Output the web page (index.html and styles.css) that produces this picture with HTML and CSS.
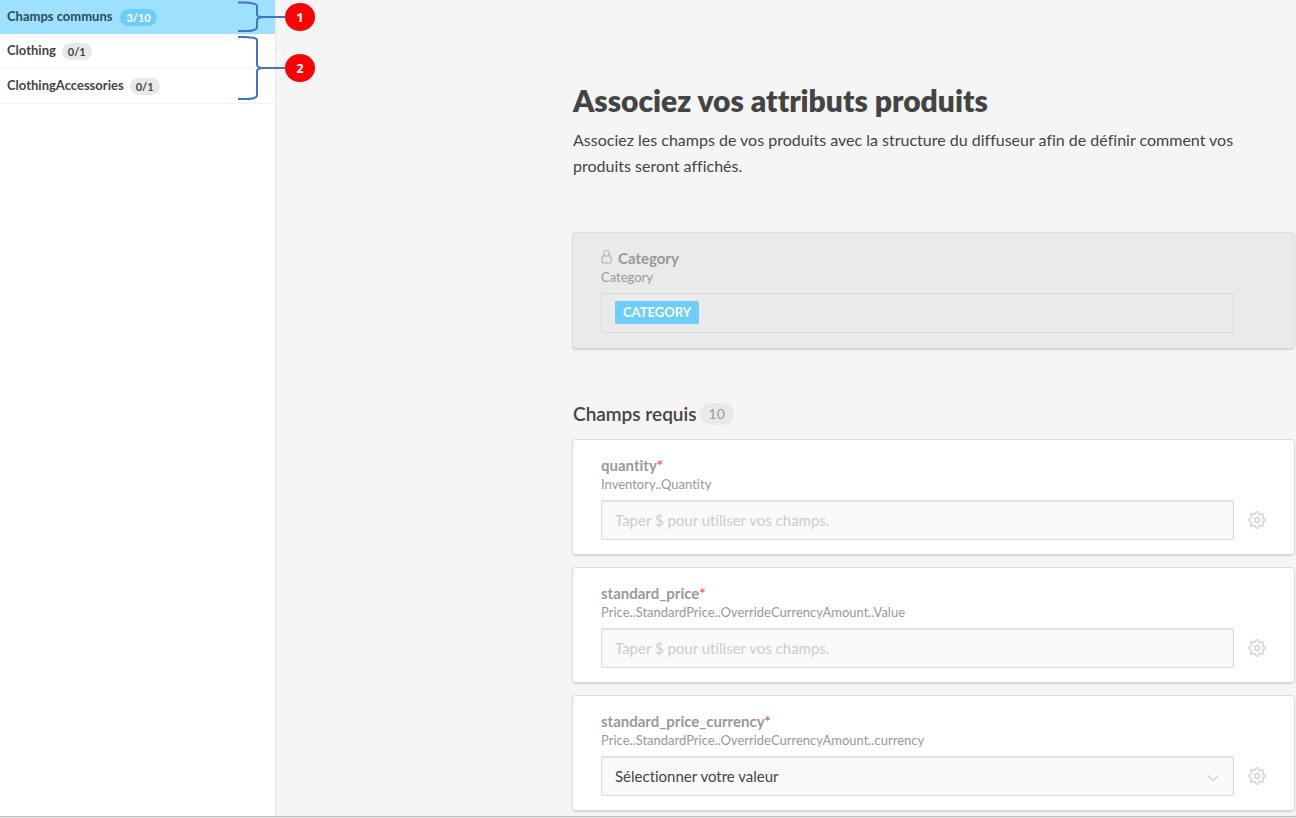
FILE: index.html
```
<!DOCTYPE html>
<html lang="fr">
<head>
<meta charset="utf-8">
<title>Associez vos attributs produits</title>
<link rel="stylesheet" href="styles.css">
</head>
<body>
<svg class="defs" aria-hidden="true">
  <symbol id="gear" viewBox="0 0 18 18">
    <path d="M7.6 2.2Q7.7.8 9 .8t1.400 1.400q.2 1 .9 1.200t1.400-.3q1.100-1 2.100-.1t-.1 2.200q-.6.800-.3 1.400t1.200.9q1.600.2 1.600 1.500t-1.600 1.500q-.9.300-1.200.9t.3 1.400q1 1.200.1 2.100t-2.100-.1q-.8-.6-1.400-.3t-.9 1.200Q10.300 17.200 9 17.200t-1.400-1.500q-.3-.9-.9-1.200t-1.400.3q-1.200 1-2.100.1t.1-2.100q.6-.8.300-1.400t-1.200-.9Q.8 10.300.8 9t1.600-1.500q.9-.3 1.200-.9t-.3-1.400q-1-1.200-.1-2.200t2.100.1q.8.500 1.400.3t.9-1.200z"/>
    <circle cx="9" cy="9" r="2.400"/>
  </symbol>
</svg>
<div class="page">
  <nav class="sidebar" aria-label="Champs">
    <a class="tab tab-active" href="#communs">Champs communs <span class="count">3/10</span></a>
    <a class="tab" href="#clothing">Clothing <span class="count">0/1</span></a>
    <a class="tab" href="#accessories">ClothingAccessories <span class="count">0/1</span></a>
    <div class="note note-first">
      <svg class="brace" width="48" height="32" viewBox="0 0 48 32"><path d="M1 1.500H8C16 2 20 3 20 5V14Q20 16 28 16H48M48 16H28Q20 16 20 19V26C20 29 16 30 8 30H1"/></svg>
      <span class="marker">1</span>
    </div>
    <div class="note note-second">
      <svg class="brace" width="48" height="66" viewBox="0 0 48 66"><path d="M1 2H8C16 2.500 20 3 20 5V30Q20 33 28 33H48M48 33H28Q20 33 20 36V60C20 63 16 64 8 64H1"/></svg>
      <span class="marker">2</span>
    </div>
  </nav>
  <main class="content">
    <h1 class="title">Associez vos attributs produits</h1>
    <p class="intro">Associez les champs de vos produits avec la structure du diffuseur afin de définir comment vos produits seront affichés.</p>

    <section class="card card-locked">
      <div class="name"><svg class="lock" width="11" height="16" viewBox="0 0 11 16"><rect x="1" y="7" width="9" height="7" rx="1"/><path d="M3 7V4a2.500 2.500 0 0 1 5 0v3"/></svg>Category</div>
      <div class="path">Category</div>
      <div class="row"><div class="field"><span class="tag">CATEGORY</span></div></div>
    </section>

    <h2 class="subtitle">Champs requis <span class="total">10</span></h2>

    <div class="cards">
      <section class="card">
        <label class="name" for="quantity">quantity<span class="required">*</span></label>
        <div class="path">Inventory..Quantity</div>
        <div class="row">
          <input class="field" id="quantity" type="text" placeholder="Taper $ pour utiliser vos champs.">
          <button class="settings" type="button" aria-label="Réglages"><svg width="18" height="18"><use href="#gear"/></svg></button>
        </div>
      </section>
      <section class="card">
        <label class="name" for="price">standard_price<span class="required">*</span></label>
        <div class="path">Price..StandardPrice..OverrideCurrencyAmount..Value</div>
        <div class="row">
          <input class="field" id="price" type="text" placeholder="Taper $ pour utiliser vos champs.">
          <button class="settings" type="button" aria-label="Réglages"><svg width="18" height="18"><use href="#gear"/></svg></button>
        </div>
      </section>
      <section class="card">
        <label class="name" for="currency">standard_price_currency<span class="required">*</span></label>
        <div class="path">Price..StandardPrice..OverrideCurrencyAmount..currency</div>
        <div class="row">
          <div class="select">
            <select class="field" id="currency"><option>Sélectionner votre valeur</option></select>
            <svg class="chevron" width="12" height="8" viewBox="0 0 12 8"><path d="M1 1.500l5 5 5-5"/></svg>
          </div>
          <button class="settings" type="button" aria-label="Réglages"><svg width="18" height="18"><use href="#gear"/></svg></button>
        </div>
      </section>
    </div>
  </main>
</div>
</body>
</html>
```
FILE: styles.css
```
* { box-sizing: border-box; }
body {
  margin: 0;
  font-family: Lato, "Liberation Sans", sans-serif;
  font-size: 15px;
  font-variant-ligatures: none;
  color: #444;
  background: #e8e8e8;
}
.defs { position: absolute; width: 0; height: 0; }
.page {
  display: flex;
  min-height: calc(100vh - 1px);
  border-bottom: 1px solid #bfbfbf;
  background: #f5f5f5;
}

.sidebar {
  position: relative;
  flex: 0 0 276px;
  background: #fff;
  border-right: 1px solid #e6e6e6;
}
.tab {
  display: flex;
  align-items: center;
  gap: 6px;
  height: 35px;
  padding: 0 7px 2px;
  border-bottom: 1px solid #f2f2f2;
  color: #444;
  font-size: 13px;
  font-weight: 700;
  text-decoration: none;
}
.tab-active {
  height: 34px;
  gap: 8px;
  background: #9de1ff;
  border-bottom: 0;
  color: #2c4a5e;
}
.count {
  height: 17px;
  margin-top: 3px;
  padding: 0 6px;
  border-radius: 9px;
  background: #e9e9e9;
  font-size: 11px;
  line-height: 17px;
}
.tab-active .count { background: #6dcff9; color: #fff; }

.note {
  position: absolute;
  left: 237px;
  display: flex;
  align-items: center;
}
.note-first { top: 1px; }
.note-second { top: 35px; }
.brace { fill: none; stroke: #4472c4; stroke-width: 2; }
.marker {
  width: 30px;
  height: 28px;
  border-radius: 50%;
  background: #f00;
  color: #fff;
  font: 700 13px/28px "Open Sans", sans-serif;
  text-align: center;
}

.content { flex: 1; min-width: 0; padding: 80px 2px 5px 297px; }
.title { margin: 0; font-size: 30px; line-height: 40px; font-weight: 800; }
.intro { margin: 7px 40px 54px 0; font-size: 16px; line-height: 26px; }
.subtitle {
  display: flex;
  align-items: center;
  gap: 3px;
  margin: 54px 0 14px;
  font-size: 19px;
  line-height: 24px;
  font-weight: 600;
}
.total {
  padding: 0 9px;
  border-radius: 11px;
  background: #e9e9e9;
  color: #999;
  font-size: 14px;
  line-height: 22px;
  font-weight: 400;
}
.cards { display: grid; gap: 14px; }
.card {
  padding: 15px 28px 14px;
  border-radius: 3px;
  background: #fff;
  box-shadow: 0 0 0 1px #dcdcdc, 0 1px 2px 0 #888;
}
.card-locked { padding-right: 60px; padding-bottom: 15px; background: #eaeaea; }
.name {
  display: flex;
  align-items: center;
  color: #999;
  line-height: 20px;
  font-weight: 700;
}
.required { color: #f0655a; }
.lock { margin: 0 6px 3px 0; fill: none; stroke: #aaa; }
.path { color: #999; font-size: 13px; line-height: 19px; }
.row { display: flex; align-items: center; gap: 14px; margin-top: 6px; }
.field {
  flex: 1;
  width: 100%;
  min-width: 0;
  height: 40px;
  padding: 0 13px 1px;
  border: 1px solid #d9d9d9;
  border-radius: 2px;
  background: #fafafa;
  box-shadow: inset 0 1px 2px #e6e6e6;
  color: #444;
  font: inherit;
  font-variant-ligatures: none;
  appearance: none;
}
.field::placeholder { color: #ccc; opacity: 1; }
.card-locked .field {
  display: flex;
  align-items: center;
  background: transparent;
  box-shadow: none;
}
.tag {
  padding: 0 8px;
  border-radius: 2px;
  background: #6dcff9;
  color: #fff;
  font-size: 13px;
  line-height: 23px;
  font-weight: 700;
}
.select { position: relative; display: flex; flex: 1; }
.chevron {
  position: absolute;
  right: 15px;
  top: 18px;
  fill: none;
  stroke: #d0d0d0;
  stroke-width: 1.500;
  pointer-events: none;
}
.settings { display: flex; padding: 0 0 1px; border: 0; background: none; }
.settings svg { fill: none; stroke: #d3d3d3; stroke-width: 1.500; }
```
